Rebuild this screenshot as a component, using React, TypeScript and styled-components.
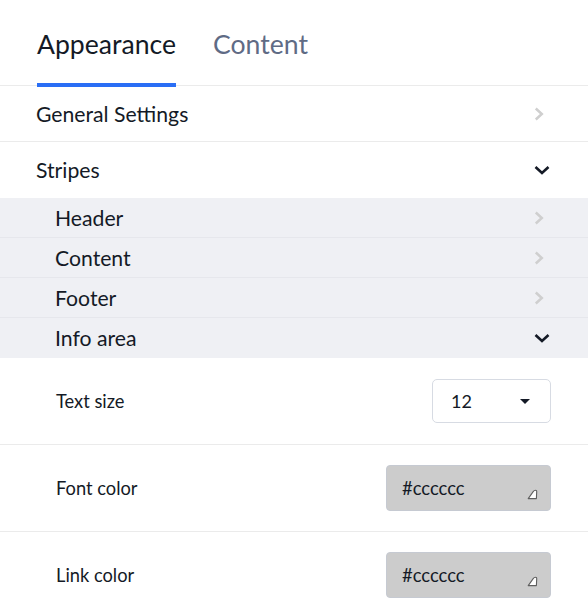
import React from "react";
import styled, { createGlobalStyle } from "styled-components";

const Global = createGlobalStyle`
  html, body { margin: 0; padding: 0; background: #ffffff; }
  body { font-family: Lato, "Open Sans", sans-serif; color: #141a26; }
`;

const Panel = styled.div`
  width: 588px;
  display: flex;
  flex-direction: column;
`;

const Tabs = styled.div`
  display: flex;
  gap: 37px;
  padding: 0 0 0 37px;
  height: 86px;
  border-bottom: 1px solid #ebebeb;
  box-sizing: border-box;
`;

const Tab = styled.div<{ $active?: boolean }>`
  display: flex;
  align-items: flex-start;
  padding-top: 28px;
  font-size: 26.6px;
  color: ${(p) => (p.$active ? "#141a26" : "#5f6b85")};
  position: relative;
  &::after {
    content: "";
    display: ${(p) => (p.$active ? "block" : "none")};
    position: absolute;
    left: 0;
    right: 0;
    bottom: -2px;
    height: 4px;
    background: #2a6ef5;
  }
`;

const Row = styled.div<{ $sub?: boolean; $h: number; $last?: boolean }>`
  display: flex;
  align-items: center;
  justify-content: space-between;
  height: ${(p) => p.$h}px;
  box-sizing: border-box;
  padding: 0 38px 0 ${(p) => (p.$sub ? 55 : 36)}px;
  font-size: 21.2px;
  background: ${(p) => (p.$sub ? "#eff0f4" : "#ffffff")};
  border-bottom: 1px solid ${(p) => (p.$last ? "transparent" : p.$sub ? "#e6e7ec" : "#ebebeb")};
`;

const ChevronBox = styled.span`
  display: flex;
  width: 16px;
  justify-content: flex-start;
  align-items: center;
`;

const SettingRow = styled.div<{ $h: number; $last?: boolean }>`
  display: flex;
  align-items: center;
  justify-content: space-between;
  height: ${(p) => p.$h}px;
  box-sizing: border-box;
  padding: 0 37px 0 56px;
  border-bottom: 1px solid ${(p) => (p.$last ? "transparent" : "#ebebeb")};
`;

const Label = styled.span`
  font-size: 18.3px;
  color: #141a26;
`;

const Select = styled.div`
  width: 119px;
  height: 44px;
  box-sizing: border-box;
  border: 1px solid #d7dbe3;
  border-radius: 5px;
  display: flex;
  align-items: center;
  justify-content: space-between;
  padding: 0 20px 0 18px;
  font-size: 18px;
  color: #141a26;
  background: #fff;
`;

const Caret = styled.span`
  width: 0;
  height: 0;
  border-left: 5px solid transparent;
  border-right: 5px solid transparent;
  border-top: 5px solid #141a26;
`;

const ColorBox = styled.div`
  width: 165px;
  height: 46px;
  box-sizing: border-box;
  border: 1px solid #c6cad2;
  border-radius: 4px;
  background: #cccccc;
  display: flex;
  align-items: center;
  padding: 0 0 0 15px;
  font-size: 18.4px;
  color: #141a26;
  position: relative;
`;

const Handle = styled.svg`
  position: absolute;
  right: 12px;
  bottom: 10px;
`;

const ChevronRight = () => (
  <svg width="12" height="14" viewBox="0 0 12 14">
    <path d="M1.8 1.5 L7.8 7 L1.8 12.5" fill="none" stroke="#cfcfcf" strokeWidth="2.5" />
  </svg>
);

const ChevronDown = () => (
  <svg width="16" height="10" viewBox="0 0 16 10">
    <path d="M1.5 2 L8 8 L14.5 2" fill="none" stroke="#141a26" strokeWidth="2.6" />
  </svg>
);

const ResizeHandle = () => (
  <Handle width="11" height="11" viewBox="0 0 11 11">
    <path d="M1.2 9.6 L6.2 2.6 Q7.1 1.3 8.5 1.3 Q9.8 1.3 9.7 2.8 L9.4 9.6 Z" fill="#ffffff" stroke="#5f5f5f" strokeWidth="1.1" strokeLinejoin="round" />
  </Handle>
);

export default function App() {
  return (
    <>
      <Global />
      <Panel>
        <Tabs>
          <Tab $active>Appearance</Tab>
          <Tab>Content</Tab>
        </Tabs>
        <Row $h={56}>
          General Settings
          <ChevronBox><ChevronRight /></ChevronBox>
        </Row>
        <Row $h={56} $last>
          Stripes
          <ChevronBox><ChevronDown /></ChevronBox>
        </Row>
        <Row $sub $h={40}>
          Header
          <ChevronBox><ChevronRight /></ChevronBox>
        </Row>
        <Row $sub $h={40}>
          Content
          <ChevronBox><ChevronRight /></ChevronBox>
        </Row>
        <Row $sub $h={40}>
          Footer
          <ChevronBox><ChevronRight /></ChevronBox>
        </Row>
        <Row $sub $h={40} $last>
          Info area
          <ChevronBox><ChevronDown /></ChevronBox>
        </Row>
        <SettingRow $h={87}>
          <Label>Text size</Label>
          <Select>
            12
            <Caret />
          </Select>
        </SettingRow>
        <SettingRow $h={87}>
          <Label>Font color</Label>
          <ColorBox>
            #cccccc
            <ResizeHandle />
          </ColorBox>
        </SettingRow>
        <SettingRow $h={87} $last>
          <Label>Link color</Label>
          <ColorBox>
            #cccccc
            <ResizeHandle />
          </ColorBox>
        </SettingRow>
      </Panel>
    </>
  );
}
